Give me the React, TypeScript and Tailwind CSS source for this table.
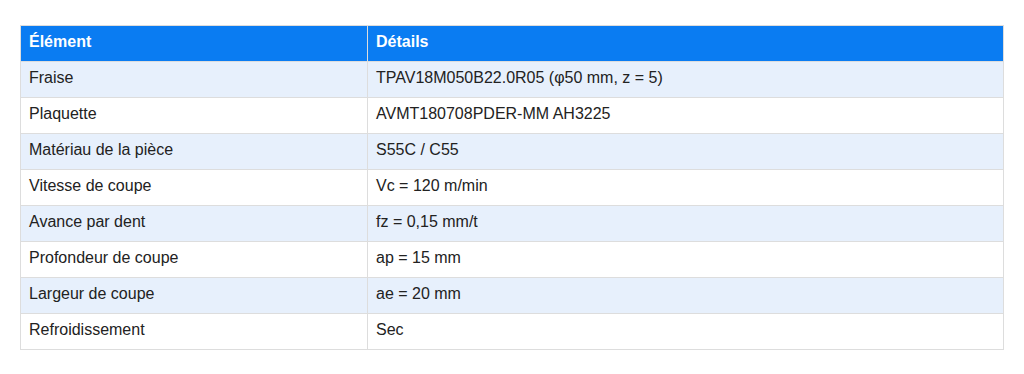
const ROWS: [string, string][] = [
  ["Fraise", "TPAV18M050B22.0R05 (φ50 mm, z = 5)"],
  ["Plaquette", "AVMT180708PDER-MM AH3225"],
  ["Matériau de la pièce", "S55C / C55"],
  ["Vitesse de coupe", "Vc = 120 m/min"],
  ["Avance par dent", "fz = 0,15 mm/t"],
  ["Profondeur de coupe", "ap = 15 mm"],
  ["Largeur de coupe", "ae = 20 mm"],
  ["Refroidissement", "Sec"],
];

export default function App() {
  return (
    <div className="min-h-[374px] bg-white px-5 pt-[25px] font-['Liberation_Sans',Arial,sans-serif] text-[16px] text-[#222]">
      <table className="w-full border-collapse">
        <thead>
          <tr className="bg-[#0a7cf2] text-left text-white">
            <th className="w-[347px] border border-[#dddddd] px-2 pt-1.5 pb-2.5 font-bold leading-[19px]">Élément</th>
            <th className="border border-[#dddddd] px-2 pt-1.5 pb-2.5 font-bold leading-[19px]">Détails</th>
          </tr>
        </thead>
        <tbody>
          {ROWS.map(([k, v], i) => (
            <tr key={k} className={i % 2 === 0 ? "bg-[#e7f0fc]" : "bg-white"}>
              <td className="border border-[#dddddd] px-2 pt-1.5 pb-2.5 leading-[19px]">{k}</td>
              <td className="border border-[#dddddd] px-2 pt-1.5 pb-2.5 leading-[19px]">{v}</td>
            </tr>
          ))}
        </tbody>
      </table>
    </div>
  );
}
